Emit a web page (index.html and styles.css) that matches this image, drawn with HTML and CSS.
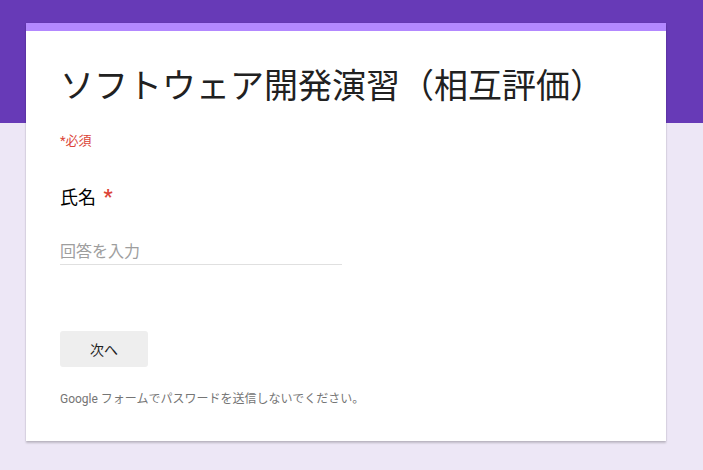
FILE: index.html
```html
<!DOCTYPE html>
<html lang="ja">
<head>
<meta charset="utf-8">
<title>ソフトウェア開発演習（相互評価）</title>
<link rel="stylesheet" href="styles.css">
</head>
<body>
<div class="page">
  <form class="card">
    <h1 class="title">ソフトウェア開発演習（相互評価）</h1>
    <div class="required-note">*必須</div>
    <div class="question">
      <div class="q-title">氏名 <span class="star">*</span></div>
      <div class="answer">回答を入力</div>
    </div>
    <button type="button" class="next">次へ</button>
    <p class="footer">Google フォームでパスワードを送信しないでください。</p>
  </form>
</div>
</body>
</html>
```
FILE: styles.css
```css
html, body {
  margin: 0;
  padding: 0;
}
body {
  background: linear-gradient(#673ab7 0, #673ab7 123px, #ede7f6 123px);
  font-family: Roboto, "Noto Sans CJK JP", sans-serif;
  min-height: 470px;
}
.page {
  padding: 23px 0 0 26px;
}
.card {
  width: 640px;
  box-sizing: border-box;
  background: #fff;
  border-top: 8px solid #b388ff;
  box-shadow: 0 2px 2px rgba(0, 0, 0, 0.2), 0 0 1px rgba(0, 0, 0, 0.15);
  padding: 35px 34px 34px 34px;
  display: flex;
  flex-direction: column;
  align-items: flex-start;
}
.title {
  margin: 0;
  font-weight: 400;
  font-size: 34px;
  line-height: 40px;
  color: #212121;
}
.required-note {
  margin-top: 25px;
  font-size: 13px;
  line-height: 20px;
  color: #db4437;
}
.question {
  margin-top: 35px;
  display: flex;
  flex-direction: column;
}
.q-title {
  font-size: 18px;
  line-height: 24px;
  height: 24px;
  color: #000;
}
.star {
  color: #db4437;
  font-size: 20px;
  font-weight: 700;
  line-height: 1;
  margin-left: 3px;
}
.answer {
  margin-top: 30px;
  width: 282px;
  font-size: 16px;
  line-height: 24px;
  color: #9e9e9e;
  border-bottom: 1px solid #e0e0e0;
}
.next {
  margin-top: 66px;
  width: 88px;
  height: 36px;
  border: 0;
  border-radius: 3px;
  background: #eeeeee;
  font-family: Roboto, "Noto Sans CJK JP", sans-serif;
  font-size: 14px;
  color: #212121;
  padding: 0;
}
.footer {
  margin: 24px 0 0 0;
  font-size: 12px;
  line-height: 16px;
  color: #757575;
}
```
